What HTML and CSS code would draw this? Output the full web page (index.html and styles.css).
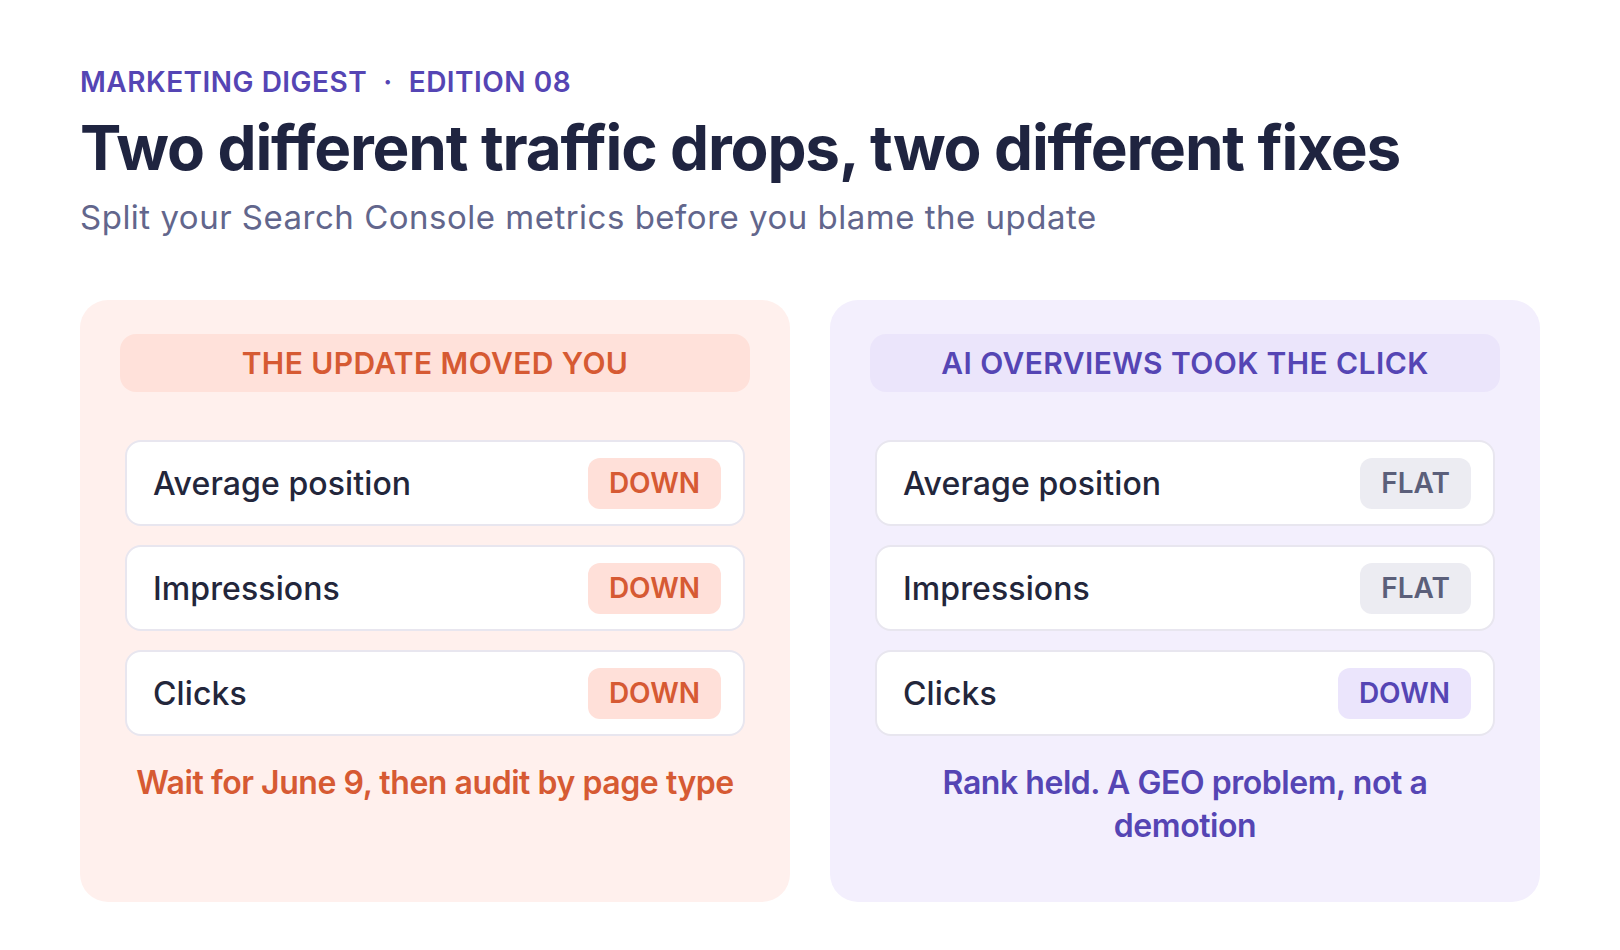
FILE: index.html
```html
<!DOCTYPE html>
<html lang="en">
<head>
<meta charset="utf-8">
<title>Marketing Digest</title>
<link rel="stylesheet" href="styles.css">
</head>
<body>
<main class="page">
  <header class="head">
    <div class="eyebrow"><span>MARKETING DIGEST</span><span class="dot">·</span><span>EDITION 08</span></div>
    <h1 class="title">Two different traffic drops, two different fixes</h1>
    <p class="subtitle">Split your Search Console metrics before you blame the update</p>
  </header>
  <section class="cards">
    <article class="card card-red">
      <div class="pill">THE UPDATE MOVED YOU</div>
      <div class="rows">
        <div class="row"><span class="metric">Average position</span><span class="badge badge-red">DOWN</span></div>
        <div class="row"><span class="metric">Impressions</span><span class="badge badge-red">DOWN</span></div>
        <div class="row"><span class="metric">Clicks</span><span class="badge badge-red">DOWN</span></div>
      </div>
      <p class="note">Wait for June 9, then audit by page type</p>
    </article>
    <article class="card card-purple">
      <div class="pill">AI OVERVIEWS TOOK THE CLICK</div>
      <div class="rows">
        <div class="row"><span class="metric">Average position</span><span class="badge badge-grey">FLAT</span></div>
        <div class="row"><span class="metric">Impressions</span><span class="badge badge-grey">FLAT</span></div>
        <div class="row"><span class="metric">Clicks</span><span class="badge badge-purple">DOWN</span></div>
      </div>
      <p class="note">Rank held. A GEO problem, not a demotion</p>
    </article>
  </section>
</main>
</body>
</html>
```

FILE: styles.css
```css
* { box-sizing: border-box; }
html, body { margin: 0; padding: 0; background: #ffffff; }
body {
  font-family: Inter, "Noto Sans", "Liberation Sans", sans-serif;
  color: #1f2440;
}
.page {
  width: 1620px;
  height: 950px;
  padding: 65px 80px 0 80px;
}
.eyebrow {
  font-size: 28px;
  line-height: 34px;
  font-weight: 600;
  letter-spacing: 0.5px;
  color: #5545b4;
  display: flex;
  align-items: center;
}
.eyebrow .dot { margin: 0 16px; }
.title {
  margin: 15px 0 0 0;
  font-size: 62px;
  line-height: 68px;
  font-weight: 700;
  color: #1f2440;
  letter-spacing: -1.15px;
}
.subtitle {
  margin: 14px 0 0 0;
  font-size: 33px;
  line-height: 42px;
  font-weight: 400;
  letter-spacing: 0.5px;
  color: #62668c;
}
.cards {
  margin-top: 62px;
  display: grid;
  grid-template-columns: 710px 710px;
  gap: 40px;
}
.card {
  height: 602px;
  border-radius: 28px;
  padding: 34px 40px 40px 40px;
  display: flex;
  flex-direction: column;
}
.card-red { background: #fff0ed; }
.card-purple { background: #f3effd; }
.pill {
  height: 58px;
  border-radius: 16px;
  display: flex;
  align-items: center;
  justify-content: center;
  font-size: 30px;
  font-weight: 600;
  letter-spacing: 0.4px;
}
.card-red .pill { background: #ffe1da; color: #d65a33; }
.card-purple .pill { background: #ebe5fb; color: #5545b4; }
.rows {
  margin: 48px 5px 0 5px;
  display: flex;
  flex-direction: column;
  gap: 19px;
}
.row {
  height: 86px;
  background: #ffffff;
  border: 2px solid #e8e6ef;
  border-radius: 16px;
  display: flex;
  align-items: center;
  justify-content: space-between;
  padding: 0 22px 0 26px;
}
.metric {
  font-size: 32px;
  font-weight: 500;
  color: #23263b;
  letter-spacing: 0.1px;
}
.badge {
  height: 51px;
  border-radius: 12px;
  padding: 0 21px;
  display: flex;
  align-items: center;
  font-size: 28px;
  font-weight: 600;
}
.badge-red { background: #ffe0d9; color: #d65a33; }
.badge-grey { background: #ececf2; color: #5b5f7a; }
.badge-purple { background: #ebe5fc; color: #5545b4; }
.note {
  margin: 25px 0 0 0;
  text-align: center;
  font-size: 32px;
  line-height: 43px;
  font-weight: 600;
  letter-spacing: -0.45px;
}
.card-red .note { color: #d65a33; }
.card-purple .note { color: #5545b4; padding: 0 40px; }
```
